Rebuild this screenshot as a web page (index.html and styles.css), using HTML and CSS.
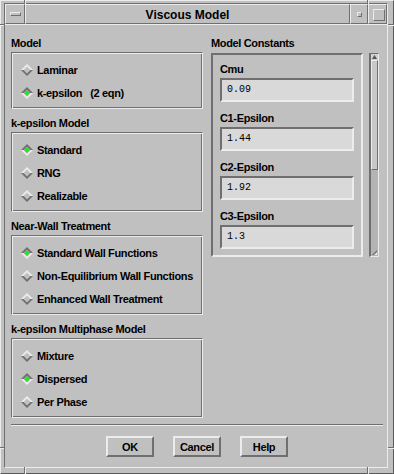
FILE: index.html
```html
<!DOCTYPE html>
<html>
<head>
<meta charset="utf-8">
<title>Viscous Model</title>
<link rel="stylesheet" href="styles.css">
</head>
<body>
<div class="window">
  <span class="mk mk-v mk-t1"></span>
  <span class="mk mk-v mk-t2"></span>
  <span class="mk mk-v mk-b1"></span>
  <span class="mk mk-v mk-b2"></span>
  <span class="mk mk-h mk-l1"></span>
  <span class="mk mk-h mk-l2"></span>
  <span class="mk mk-h mk-r1"></span>
  <span class="mk mk-h mk-r2"></span>
  <div class="inner">
    <div class="titlebar">
      <div class="tb tb-menu"><span class="raised menu-bar"></span></div>
      <div class="tb tb-title">Viscous Model</div>
      <div class="tb tb-min"><span class="raised min-sq"></span></div>
      <div class="tb tb-max"><span class="raised max-sq"></span></div>
    </div>
    <div class="content">
      <div class="columns">
        <div class="left">
          <div class="group">
            <div class="label">Model</div>
            <div class="box">
              <div class="item"><svg class="dia" width="12" height="12" viewBox="0 0 12 12"><polygon points="6,0 12,6 0,6" fill="#ececec"/><polygon points="0,6 12,6 6,12" fill="#6f6f6f"/><polygon points="6,2.5 9.5,6 6,9.5 2.5,6" fill="#c0c0c0"/></svg><span>Laminar</span></div>
              <div class="item"><svg class="dia" width="12" height="12" viewBox="0 0 12 12"><polygon points="6,0 12,6 0,6" fill="#6f6f6f"/><polygon points="0,6 12,6 6,12" fill="#ececec"/><polygon points="6,2.5 9.5,6 6,9.5 2.5,6" fill="#a0a0a0"/><polygon points="6,3.8 8.2,6 6,8.2 3.8,6" fill="#00ff00"/></svg><span class="pre">k-epsilon   (2 eqn)</span></div>
            </div>
          </div>
          <div class="group">
            <div class="label">k-epsilon Model</div>
            <div class="box">
              <div class="item"><svg class="dia" width="12" height="12" viewBox="0 0 12 12"><polygon points="6,0 12,6 0,6" fill="#6f6f6f"/><polygon points="0,6 12,6 6,12" fill="#ececec"/><polygon points="6,2.5 9.5,6 6,9.5 2.5,6" fill="#a0a0a0"/><polygon points="6,3.8 8.2,6 6,8.2 3.8,6" fill="#00ff00"/></svg><span>Standard</span></div>
              <div class="item"><svg class="dia" width="12" height="12" viewBox="0 0 12 12"><polygon points="6,0 12,6 0,6" fill="#ececec"/><polygon points="0,6 12,6 6,12" fill="#6f6f6f"/><polygon points="6,2.5 9.5,6 6,9.5 2.5,6" fill="#c0c0c0"/></svg><span>RNG</span></div>
              <div class="item"><svg class="dia" width="12" height="12" viewBox="0 0 12 12"><polygon points="6,0 12,6 0,6" fill="#ececec"/><polygon points="0,6 12,6 6,12" fill="#6f6f6f"/><polygon points="6,2.5 9.5,6 6,9.5 2.5,6" fill="#c0c0c0"/></svg><span>Realizable</span></div>
            </div>
          </div>
          <div class="group">
            <div class="label">Near-Wall Treatment</div>
            <div class="box">
              <div class="item"><svg class="dia" width="12" height="12" viewBox="0 0 12 12"><polygon points="6,0 12,6 0,6" fill="#6f6f6f"/><polygon points="0,6 12,6 6,12" fill="#ececec"/><polygon points="6,2.5 9.5,6 6,9.5 2.5,6" fill="#a0a0a0"/><polygon points="6,3.8 8.2,6 6,8.2 3.8,6" fill="#00ff00"/></svg><span>Standard Wall Functions</span></div>
              <div class="item"><svg class="dia" width="12" height="12" viewBox="0 0 12 12"><polygon points="6,0 12,6 0,6" fill="#ececec"/><polygon points="0,6 12,6 6,12" fill="#6f6f6f"/><polygon points="6,2.5 9.5,6 6,9.5 2.5,6" fill="#c0c0c0"/></svg><span>Non-Equilibrium Wall Functions</span></div>
              <div class="item"><svg class="dia" width="12" height="12" viewBox="0 0 12 12"><polygon points="6,0 12,6 0,6" fill="#ececec"/><polygon points="0,6 12,6 6,12" fill="#6f6f6f"/><polygon points="6,2.5 9.5,6 6,9.5 2.5,6" fill="#c0c0c0"/></svg><span>Enhanced Wall Treatment</span></div>
            </div>
          </div>
          <div class="group">
            <div class="label">k-epsilon Multiphase Model</div>
            <div class="box">
              <div class="item"><svg class="dia" width="12" height="12" viewBox="0 0 12 12"><polygon points="6,0 12,6 0,6" fill="#ececec"/><polygon points="0,6 12,6 6,12" fill="#6f6f6f"/><polygon points="6,2.5 9.5,6 6,9.5 2.5,6" fill="#c0c0c0"/></svg><span>Mixture</span></div>
              <div class="item"><svg class="dia" width="12" height="12" viewBox="0 0 12 12"><polygon points="6,0 12,6 0,6" fill="#6f6f6f"/><polygon points="0,6 12,6 6,12" fill="#ececec"/><polygon points="6,2.5 9.5,6 6,9.5 2.5,6" fill="#a0a0a0"/><polygon points="6,3.8 8.2,6 6,8.2 3.8,6" fill="#00ff00"/></svg><span>Dispersed</span></div>
              <div class="item"><svg class="dia" width="12" height="12" viewBox="0 0 12 12"><polygon points="6,0 12,6 0,6" fill="#ececec"/><polygon points="0,6 12,6 6,12" fill="#6f6f6f"/><polygon points="6,2.5 9.5,6 6,9.5 2.5,6" fill="#c0c0c0"/></svg><span>Per Phase</span></div>
            </div>
          </div>
        </div>
        <div class="right">
          <div class="label">Model Constants</div>
          <div class="rrow">
            <div class="cbox">
              <div class="clabel">Cmu</div>
              <div class="field">0.09</div>
              <div class="clabel">C1-Epsilon</div>
              <div class="field">1.44</div>
              <div class="clabel">C2-Epsilon</div>
              <div class="field">1.92</div>
              <div class="clabel">C3-Epsilon</div>
              <div class="field last">1.3</div>
            </div>
            <div class="scroll">
              <div class="sb-arrow"><svg width="5" height="4" viewBox="0 0 5 4"><polygon points="2.5,0 5,4 0,4" fill="#555"/></svg></div>
              <div class="sb-thumb"></div>
              <div class="sb-rest"></div>
              <div class="sb-grip"><svg width="5" height="5" viewBox="0 0 5 5"><polygon points="5,0 5,5 0,5" fill="#6f6f6f"/><polygon points="5,2 5,5 2,5" fill="#ececec"/></svg></div>
            </div>
          </div>
        </div>
      </div>
      <div class="sep"></div>
      <div class="buttons">
        <div class="btn">OK</div>
        <div class="btn">Cancel</div>
        <div class="btn">Help</div>
      </div>
    </div>
  </div>
</div>
</body>
</html>
```

FILE: styles.css
```css
html, body {
  margin: 0;
  padding: 0;
}
body {
  background: #c0c0c0;
  font-family: "Liberation Sans", Arial, sans-serif;
  font-weight: bold;
  font-size: 11px;
  color: #000;
  letter-spacing: -0.35px;
}
.window {
  position: relative;
  width: 394px;
  height: 474px;
  box-sizing: border-box;
  background: #c0c0c0;
  border: 1px solid;
  border-color: #ececec #5a5a5a #5a5a5a #ececec;
  padding: 2px 5px 5px 3px;
  display: flex;
}
.mk {
  position: absolute;
  background: #6f6f6f;
}
.mk-v {
  width: 1px;
  box-shadow: 1px 0 #ececec;
}
.mk-h {
  height: 1px;
  box-shadow: 0 1px #ececec;
}
.mk-t1 { left: 23px; top: -1px; height: 4px; }
.mk-t2 { left: 366px; top: -1px; height: 4px; }
.mk-b1 { left: 23px; bottom: -1px; height: 7px; }
.mk-b2 { left: 366px; bottom: -1px; height: 7px; }
.mk-l1 { left: -1px; top: 23px; width: 4px; }
.mk-l2 { left: -1px; top: 446px; width: 4px; }
.mk-r1 { right: -1px; top: 23px; width: 6px; }
.mk-r2 { right: -1px; top: 446px; width: 6px; }

.inner {
  flex: 1;
  min-width: 0;
  display: flex;
  flex-direction: column;
  border: 1px solid;
  border-color: #6f6f6f #ececec #ececec #6f6f6f;
}
.titlebar {
  display: flex;
  height: 20px;
}
.tb {
  box-sizing: border-box;
  border: 1px solid;
  border-color: #ececec #6f6f6f #6f6f6f #ececec;
  display: flex;
  align-items: center;
  justify-content: center;
}
.tb-menu { width: 20px; }
.tb-title {
  flex: 1;
  font-size: 12px;
  letter-spacing: 0;
  padding-top: 1px;
}
.tb-min { width: 18px; }
.tb-max { width: 19px; }
.raised {
  display: block;
  box-sizing: border-box;
  border: 1px solid;
  border-color: #ececec #6f6f6f #6f6f6f #ececec;
}
.menu-bar { width: 11px; height: 4px; margin-left: 1px; }
.min-sq { width: 5px; height: 5px; }
.max-sq { width: 12px; height: 12px; margin-left: 2px; margin-top: 2px; }

.content {
  flex: 1;
  display: flex;
  flex-direction: column;
  border-top: 1px solid #ececec;
  padding: 12px 8px 0 6px;
}
.columns {
  display: flex;
  gap: 8px;
}
.left {
  width: 192px;
  display: flex;
  flex-direction: column;
  gap: 8px;
}
.label {
  height: 12px;
  line-height: 12px;
  margin-bottom: 3px;
  white-space: nowrap;
}
.box {
  box-sizing: border-box;
  border: 1px solid;
  border-color: #6f6f6f #ececec #ececec #6f6f6f;
  box-shadow: inset 1px 1px #ececec, inset -1px -1px #6f6f6f;
  padding: 5px 0 4px 9px;
}
.item {
  height: 23px;
  display: flex;
  align-items: center;
  gap: 4px;
  white-space: nowrap;
}
.dia {
  flex: none;
  display: block;
}
.pre {
  white-space: pre;
}

.right {
  width: 168px;
  display: flex;
  flex-direction: column;
}
.rrow {
  display: flex;
  gap: 6px;
  margin-top: 1px;
}
.cbox {
  width: 152px;
  box-sizing: border-box;
  border: 2px solid;
  border-color: #6f6f6f #ececec #ececec #6f6f6f;
  padding: 8px 7px 6px 7px;
}
.clabel {
  height: 12px;
  line-height: 12px;
  margin-bottom: 3px;
}
.field {
  height: 24px;
  box-sizing: border-box;
  border: 2px solid;
  border-color: #6f6f6f #ececec #ececec #6f6f6f;
  background: #d9d9d9;
  font-family: "Liberation Mono", "Courier New", monospace;
  font-weight: normal;
  font-size: 10px;
  letter-spacing: 0;
  line-height: 20px;
  padding-left: 5px;
  margin-bottom: 10px;
}
.field.last {
  margin-bottom: 0;
}
.scroll {
  width: 10px;
  box-sizing: border-box;
  border-style: solid;
  border-width: 1px 1px 1px 2px;
  border-color: #6f6f6f #ececec #ececec #6f6f6f;
  display: flex;
  flex-direction: column;
}
.sb-arrow {
  height: 6px;
  display: flex;
  align-items: center;
  justify-content: center;
  background: #d0d0d0;
}
.sb-arrow svg, .sb-grip svg { display: block; }
.sb-thumb {
  height: 110px;
  box-sizing: border-box;
  border: 1px solid;
  border-color: #ececec #6f6f6f #6f6f6f #ececec;
  background: #c8c8c8;
}
.sb-rest {
  flex: 1;
  background: #b4b4b4;
}
.sb-grip {
  height: 7px;
  display: flex;
  align-items: center;
  justify-content: center;
  background: #b4b4b4;
}

.sep {
  margin-top: 6px;
  margin-right: -4px;
  border-top: 1px solid #6f6f6f;
  border-bottom: 1px solid #ececec;
}
.buttons {
  display: flex;
  justify-content: center;
  gap: 19px;
  margin-top: 10px;
  margin-right: -4px;
}
.btn {
  width: 48px;
  height: 21px;
  box-sizing: border-box;
  border: 2px solid;
  border-color: #ececec #6f6f6f #6f6f6f #ececec;
  display: flex;
  align-items: center;
  justify-content: center;
}
```
